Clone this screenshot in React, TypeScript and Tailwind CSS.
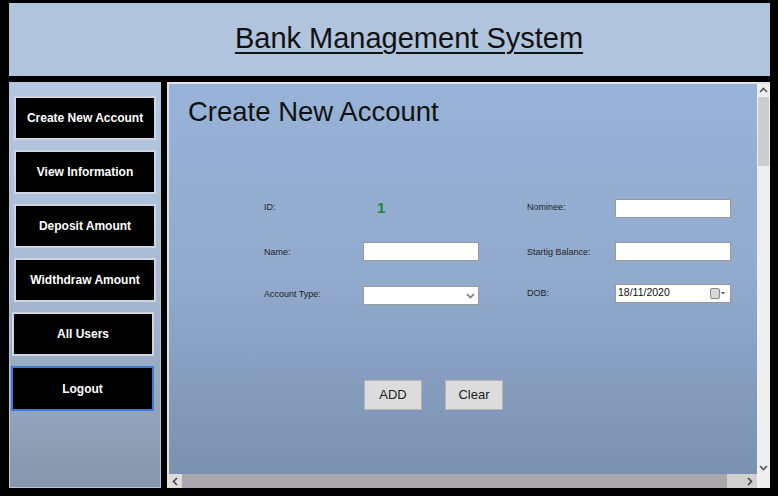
import React from "react";

const menu = [
  "Create New Account",
  "View Information",
  "Deposit Amount",
  "Widthdraw Amount",
];

function Chevron({ dir, className }: { dir: "up" | "down" | "left" | "right"; className?: string }) {
  const pts = {
    up: "1,6 4.5,2.5 8,6",
    down: "1,3 4.5,6.5 8,3",
    left: "6,1 2.5,4.5 6,8",
    right: "3,1 6.5,4.5 3,8",
  }[dir];
  return (
    <svg width="9" height="9" viewBox="0 0 9 9" className={className}>
      <polyline points={pts} fill="none" stroke="currentColor" strokeWidth="1.6" />
    </svg>
  );
}

function TextBox() {
  return <div className="w-[116px] h-[19px] bg-white border border-[#9a9a9a]" />;
}

export default function App() {
  return (
    <div className="w-[778px] h-[496px] bg-black overflow-hidden pt-[3px] pl-[9px] pr-[8px] font-['Liberation_Sans',Arial,sans-serif]">
      <header className="h-[73px] bg-[#b0c4de] flex items-center justify-center pl-[39px]">
        <h1 className="text-[29px] leading-none text-[#111] underline underline-offset-[4px] decoration-[2px] pb-[2px]">
          Bank Management System
        </h1>
      </header>

      <div className="mt-[6px] h-[406px] flex gap-[6px]">
        <aside className="w-[152px] bg-gradient-to-b from-[#b5c8e2] via-[#a8bad3] to-[#8696ad] border border-[#b8c6da] pt-[13px] flex flex-col gap-[10px]">
          {menu.map((m) => (
            <button
              key={m}
              className="mx-[4px] h-[44px] bg-black border-2 border-[#cfd6e2] text-white font-bold text-[12px]"
            >
              {m}
            </button>
          ))}
          <button className="ml-[2px] w-[142px] h-[44px] bg-black border-2 border-[#cfd6e2] text-white font-bold text-[12px]">
            All Users
          </button>
          <button className="ml-[1px] w-[143px] h-[45px] bg-black border-2 border-[#3d7bd6] text-white font-bold text-[12px]">
            Logout
          </button>
        </aside>

        <main className="flex-1 flex flex-col border-l-2 border-t-2 border-[#e2e4e8]">
          <div className="flex flex-1 min-h-0">
            <div className="flex-1 bg-gradient-to-b from-[#98b3d8] via-[#91aacd] to-[#7b91b0] pt-[13px]">
              <h2 className="pl-[19px] text-[27.5px] leading-[30px] text-[#111]">Create New Account</h2>

              <div className="text-[9px] text-[#222]">
                <div className="mt-[72px] h-[18px] flex items-center pl-[95px]">
                  <span className="w-[99px]">ID:</span>
                  <span className="w-[116px] pl-[14px] text-[15px] font-semibold text-[#1d8a35]">1</span>
                  <span className="w-[48px]" />
                  <span className="w-[88px]">Nominee:</span>
                  <TextBox />
                </div>

                <div className="mt-[25px] h-[18px] flex items-center pl-[95px]">
                  <span className="w-[99px] pt-[3px]">Name:</span>
                  <TextBox />
                  <span className="w-[48px]" />
                  <span className="w-[88px] pt-[3px]">Startig Balance:</span>
                  <TextBox />
                </div>

                <div className="mt-[25px] h-[18px] flex items-center pl-[95px]">
                  <span className="w-[99px] pt-[2px]">Account Type:</span>
                  <div className="w-[116px] h-[19px] mt-[2px] bg-white border border-[#9a9a9a] flex items-center justify-end pr-[3px] text-[#777]">
                    <Chevron dir="down" />
                  </div>
                  <span className="w-[48px]" />
                  <span className="w-[88px]">DOB:</span>
                  <div className="w-[116px] h-[19px] -mt-[2px] bg-white border border-[#9a9a9a] flex items-center pl-[2px] pr-[4px]">
                    <span className="text-[10.5px] text-[#111] flex-1">18/11/2020</span>
                    <svg width="16" height="11" viewBox="0 0 16 11">
                      <rect x="0.5" y="0.5" width="9" height="10" rx="1.5" fill="#d8d8d8" stroke="#8a8a8a" />
                      <polygon points="11,4 15,4 13,6.5" fill="#555" />
                    </svg>
                  </div>
                </div>
              </div>

              <div className="mt-[77px] pl-[195px] flex gap-[23px]">
                <button className="w-[58px] h-[30px] bg-[#dcdcdc] border border-[#b5b5b5] text-[13px] text-[#222]">ADD</button>
                <button className="w-[58px] h-[30px] bg-[#dcdcdc] border border-[#b5b5b5] text-[13px] text-[#222]">Clear</button>
              </div>
            </div>

            <div className="w-[13px] bg-[#efefef] flex flex-col items-center text-[#555]">
              <div className="h-[13px] flex items-center justify-center">
                <Chevron dir="up" />
              </div>
              <div className="w-[11px] h-[69px] bg-[#cdcdcd]" />
              <div className="flex-1" />
              <div className="h-[14px] flex items-center justify-center">
                <Chevron dir="down" />
              </div>
            </div>
          </div>

          <div className="h-[14px] flex text-[#444]">
            <div className="w-[13px] bg-[#dddddd] flex items-center justify-center">
              <Chevron dir="left" />
            </div>
            <div className="w-[545px] bg-[#aaa7ad]" />
            <div className="flex-1 bg-[#d0d0d0] flex items-center justify-end pr-[3px]">
              <Chevron dir="right" />
            </div>
            <div className="w-[13px] bg-[#efefef]" />
          </div>
        </main>
      </div>
    </div>
  );
}
